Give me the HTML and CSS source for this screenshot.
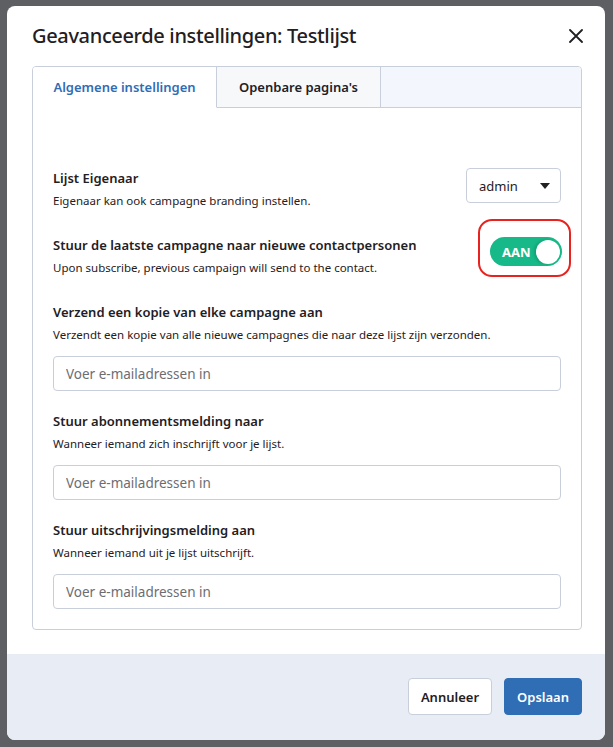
FILE: index.html
```html
<!DOCTYPE html>
<html lang="nl">
<head>
  <meta charset="UTF-8">
  <title>Geavanceerde instellingen</title>
  <link rel="stylesheet" href="styles.css">
</head>
<body>
  <div class="modal">
    <div class="modal-header">
      <h2>Geavanceerde instellingen: Testlijst</h2>
      <button class="close" aria-label="Sluiten">
        <svg width="14" height="14" viewBox="0 0 14 14"><path d="M1 1L13 13M13 1L1 13" stroke="#1f2023" stroke-width="1.8" stroke-linecap="round"/></svg>
      </button>
    </div>

    <div class="modal-body">
      <div class="tabs">
        <div class="tab-bar">
          <div class="tab active">Algemene instellingen</div>
          <div class="tab">Openbare pagina's</div>
          <div class="tab-rest"></div>
        </div>

        <div class="tab-content">
          <div class="row">
            <div>
              <div class="label">Lijst Eigenaar</div>
              <div class="hint">Eigenaar kan ook campagne branding instellen.</div>
            </div>
            <div class="select">
              <span>admin</span>
              <svg width="10" height="6" viewBox="0 0 10 6"><path d="M0 0H10L5 6Z" fill="#222"/></svg>
            </div>
          </div>

          <div class="row">
            <div>
              <div class="label">Stuur de laatste campagne naar nieuwe contactpersonen</div>
              <div class="hint">Upon subscribe, previous campaign will send to the contact.</div>
            </div>
            <div class="highlight">
              <div class="toggle">
                <span>AAN</span>
                <div class="knob"></div>
              </div>
            </div>
          </div>

          <div class="field">
            <div class="label">Verzend een kopie van elke campagne aan</div>
            <div class="hint">Verzendt een kopie van alle nieuwe campagnes die naar deze lijst zijn verzonden.</div>
            <input type="text" placeholder="Voer e-mailadressen in">
          </div>

          <div class="field">
            <div class="label">Stuur abonnementsmelding naar</div>
            <div class="hint">Wanneer iemand zich inschrijft voor je lijst.</div>
            <input type="text" placeholder="Voer e-mailadressen in">
          </div>

          <div class="field">
            <div class="label">Stuur uitschrijvingsmelding aan</div>
            <div class="hint">Wanneer iemand uit je lijst uitschrijft.</div>
            <input type="text" placeholder="Voer e-mailadressen in">
          </div>
        </div>
      </div>
    </div>

    <div class="modal-footer">
      <button class="btn">Annuleer</button>
      <button class="btn primary">Opslaan</button>
    </div>
  </div>
</body>
</html>
```

FILE: styles.css
```css
body {
  margin: 0;
  padding: 6px 8px 7px 7px;
  background-color: #5e5f63;
  font-family: 'Noto Sans', sans-serif;
  color: #1f2023;
}

.modal {
  background: white;
  border-radius: 8px;
  overflow: hidden;
  height: 734px;
  display: flex;
  flex-direction: column;
}

.modal-header {
  display: flex;
  align-items: flex-start;
  justify-content: space-between;
  padding: 16px 22px 0 25px;
  height: 44px;
}

.modal-header h2 {
  margin: 0;
  font-size: 20px;
  line-height: 28px;
  font-weight: 500;
  letter-spacing: -0.35px;
}

.close {
  border: none;
  background: none;
  padding: 0;
  margin-top: 7px;
  display: flex;
  cursor: pointer;
}

.modal-body {
  padding: 0 23px 0 25px;
  flex: 1;
}

.tabs {
  border: 1px solid #c9cedb;
  border-radius: 4px;
  height: 562px;
  overflow: hidden;
}

.tab-bar {
  display: flex;
  height: 41px;
}

.tab {
  display: flex;
  align-items: center;
  justify-content: center;
  font-size: 13px;
  font-weight: 600;
  border-bottom: 1px solid #c9cedb;
  border-right: 1px solid #c9cedb;
  background: #f7f8fa;
  width: 163px;
}

.tab.active {
  width: 183px;
  background: white;
  color: #2f6db5;
  border-bottom-color: white;
}

.tab-rest {
  flex: 1;
  background: #f3f6fc;
  border-bottom: 1px solid #c9cedb;
}

.tab-content {
  padding: 61px 20px 0 20px;
}

.row {
  display: flex;
  justify-content: space-between;
  align-items: flex-start;
  margin-bottom: 27px;
}

.label {
  font-size: 13px;
  font-weight: 600;
  line-height: 18px;
}

.hint {
  font-size: 11.5px;
  line-height: 16px;
  margin-top: 6px;
}

.select {
  width: 95px;
  height: 35px;
  margin-top: -1px;
  box-sizing: border-box;
  border: 1px solid #c9cedb;
  border-radius: 4px;
  display: flex;
  align-items: center;
  justify-content: space-between;
  padding: 0 10px 0 12px;
  font-size: 13px;
}

.highlight {
  border: 2px solid #e8231f;
  border-radius: 14px;
  padding: 16px 7px 9px 10px;
  margin: -17px -10px -20px 0;
}

.toggle {
  width: 72px;
  height: 29px;
  border-radius: 15px;
  background: #16b987;
  display: flex;
  align-items: center;
  justify-content: space-between;
  padding: 0 2px 0 12px;
  box-sizing: border-box;
  color: white;
  font-size: 13px;
  font-weight: 700;
}

.knob {
  width: 24px;
  height: 24px;
  border-radius: 50%;
  background: white;
  box-shadow: -2px 0 3px rgba(0, 0, 0, 0.15);
}

.field {
  margin-bottom: 21px;
}

input[type="text"] {
  display: block;
  width: 100%;
  box-sizing: border-box;
  height: 35px;
  margin-top: 13px;
  padding: 0 12px;
  border: 1px solid #c9cedb;
  border-radius: 4px;
  font-family: inherit;
  font-size: 13.5px;
}

input::placeholder {
  color: #6c6d72;
}

.modal-footer {
  background: #e8ecf4;
  height: 86px;
  display: flex;
  justify-content: flex-end;
  align-items: flex-start;
  gap: 12px;
  padding: 24px 23px 0 0;
  box-sizing: border-box;
}

.btn {
  height: 37px;
  padding: 0 12px;
  border: 1px solid #c9cedb;
  border-radius: 4px;
  background: white;
  font-family: inherit;
  font-size: 13px;
  font-weight: 600;
  color: #1f2023;
  cursor: pointer;
}

.btn.primary {
  background: #2f6db5;
  border-color: #2f6db5;
  color: white;
}
```
